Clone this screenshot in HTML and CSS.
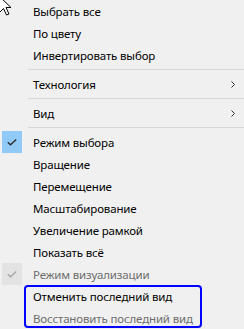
FILE: index.html
```html
<!DOCTYPE html>
<html lang="ru">
<head>
<meta charset="utf-8">
<title>Menu</title>
<link rel="stylesheet" href="styles.css">
</head>
<body>
<div class="menu">
  <div class="item"><span class="gutter"></span><span class="label">Выбрать все</span></div>
  <div class="item"><span class="gutter"></span><span class="label">По цвету</span></div>
  <div class="item"><span class="gutter"></span><span class="label">Инвертировать выбор</span></div>
  <div class="sep"></div>
  <div class="item"><span class="gutter"></span><span class="label">Технология</span>
    <svg class="chev" width="4" height="7" viewBox="0 0 4 7"><path d="M0.5 0.5 L3.5 3.5 L0.5 6.5" fill="none" stroke="#333" stroke-width="1"/></svg></div>
  <div class="sep"></div>
  <div class="item"><span class="gutter"></span><span class="label">Вид</span>
    <svg class="chev" width="4" height="7" viewBox="0 0 4 7"><path d="M0.5 0.5 L3.5 3.5 L0.5 6.5" fill="none" stroke="#333" stroke-width="1"/></svg></div>
  <div class="sep"></div>
  <div class="item"><span class="gutter"><span class="check on"><svg width="10" height="7" viewBox="0 0 10 7"><path d="M0.8 3.2 L3.5 5.8 L9.2 0.6" fill="none" stroke="#2b2b2b" stroke-width="1.3"/></svg></span></span><span class="label">Режим выбора</span></div>
  <div class="item"><span class="gutter"></span><span class="label">Вращение</span></div>
  <div class="item"><span class="gutter"></span><span class="label">Перемещение</span></div>
  <div class="item"><span class="gutter"></span><span class="label">Масштабирование</span></div>
  <div class="item"><span class="gutter"></span><span class="label">Увеличение рамкой</span></div>
  <div class="item"><span class="gutter"></span><span class="label">Показать всё</span></div>
  <div class="item disabled"><span class="gutter"><span class="check off"><svg width="10" height="7" viewBox="0 0 10 7"><path d="M0.8 3.2 L3.5 5.8 L9.2 0.6" fill="none" stroke="#a6a6a6" stroke-width="1.3"/></svg></span></span><span class="label">Режим визуализации</span></div>
  <div class="item"><span class="gutter"></span><span class="label">Отменить последний вид</span></div>
  <div class="item disabled"><span class="gutter"></span><span class="label">Восстановить последний вид</span></div>
</div>
<div class="annot"></div>
<svg class="cursor" width="14" height="22" viewBox="0 0 14 22"><path d="M0.5 0.5 L0.5 16.5 L4.5 12.5 L7.5 19 L10 18 L7 11.5 L12 11.5 Z" fill="#fff" stroke="#000" stroke-width="1" stroke-linejoin="miter"/></svg>
</body>
</html>
```
FILE: styles.css
```css
html, body {
  margin: 0;
  padding: 0;
  background: #f0f0f0;
}
body {
  width: 244px;
  height: 329px;
  overflow: hidden;
  position: relative;
  font-family: "Noto Sans", "Open Sans", sans-serif;
  font-size: 11.5px;
  letter-spacing: -0.15px;
  color: #000;
}
.menu {
  display: flex;
  flex-direction: column;
}
.item {
  height: 22px;
  display: flex;
  align-items: center;
}
.gutter {
  width: 33px;
  height: 22px;
  display: flex;
  padding-left: 2px;
  box-sizing: border-box;
  flex: none;
}
.check {
  width: 20px;
  height: 22px;
  display: flex;
  align-items: center;
  justify-content: center;
}
.check.on { background: #91c9f7; }
.check.off { background: #e3e3e3; }
.label {
  flex: 1;
  white-space: nowrap;
}
.disabled .label { color: #6d6d6d; }
.chev {
  flex: none;
  margin-right: 9px;
}
.sep {
  height: 7px;
  display: flex;
  align-items: center;
  padding-left: 28px;
}
.sep::after {
  content: "";
  flex: 1;
  height: 1px;
  background: #d7d7d7;
}
.annot {
  position: absolute;
  left: 24px;
  top: 285px;
  width: 178px;
  height: 43px;
  box-sizing: border-box;
  border: 2px solid #0000ff;
  border-radius: 4px;
}
.cursor {
  position: absolute;
  left: -1px;
  top: -4px;
}
```
